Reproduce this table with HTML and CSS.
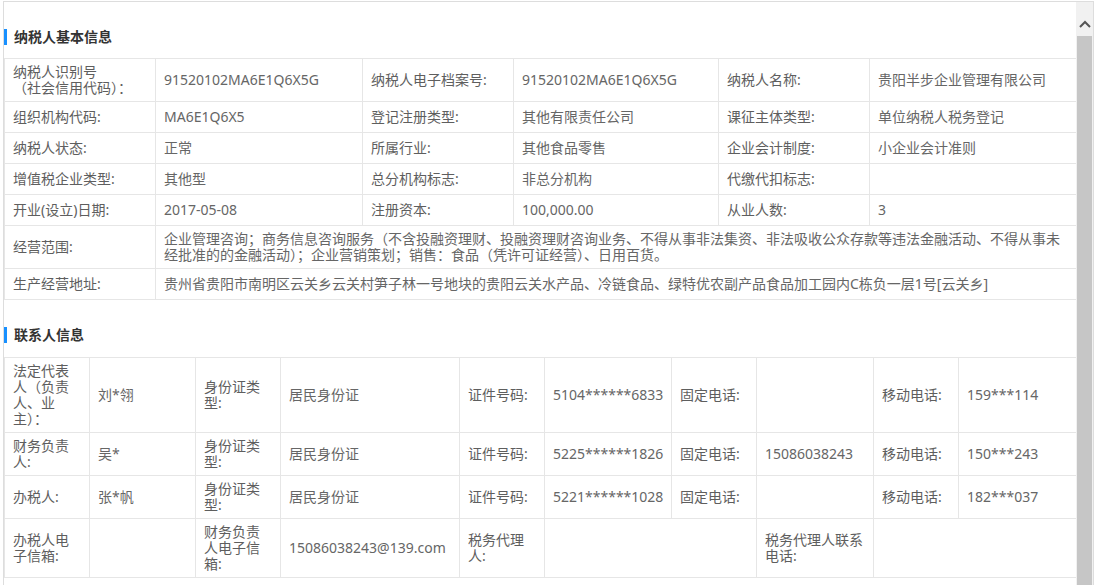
FILE: index.html
```html
<!DOCTYPE html>
<html lang="zh-CN">
<head>
<meta charset="utf-8">
<title>纳税人信息</title>
<link rel="stylesheet" href="styles.css">
</head>
<body>
<div class="frame">
  <div class="content">
    <div class="section-title">纳税人基本信息</div>
    <table class="info">
      <colgroup>
        <col class="c151"><col class="c207"><col class="c151"><col class="c205"><col class="c151"><col class="c207">
      </colgroup>
      <tr>
        <td class="lbl">纳税人识别号<br>（社会信用代码）：</td>
        <td>91520102MA6E1Q6X5G</td>
        <td class="lbl">纳税人电子档案号:</td>
        <td>91520102MA6E1Q6X5G</td>
        <td class="lbl">纳税人名称:</td>
        <td>贵阳半步企业管理有限公司</td>
      </tr>
      <tr>
        <td class="lbl">组织机构代码:</td>
        <td>MA6E1Q6X5</td>
        <td class="lbl">登记注册类型:</td>
        <td>其他有限责任公司</td>
        <td class="lbl">课征主体类型:</td>
        <td>单位纳税人税务登记</td>
      </tr>
      <tr>
        <td class="lbl">纳税人状态:</td>
        <td>正常</td>
        <td class="lbl">所属行业:</td>
        <td>其他食品零售</td>
        <td class="lbl">企业会计制度:</td>
        <td>小企业会计准则</td>
      </tr>
      <tr>
        <td class="lbl">增值税企业类型:</td>
        <td>其他型</td>
        <td class="lbl">总分机构标志:</td>
        <td>非总分机构</td>
        <td class="lbl">代缴代扣标志:</td>
        <td></td>
      </tr>
      <tr>
        <td class="lbl">开业(设立)日期:</td>
        <td>2017-05-08</td>
        <td class="lbl">注册资本:</td>
        <td>100,000.00</td>
        <td class="lbl">从业人数:</td>
        <td>3</td>
      </tr>
      <tr>
        <td class="lbl">经营范围:</td>
        <td colspan="5">企业管理咨询；商务信息咨询服务（不含投融资理财、投融资理财咨询业务、不得从事非法集资、非法吸收公众存款等违法金融活动、不得从事未经批准的的金融活动）；企业营销策划；销售：食品（凭许可证经营）、日用百货。</td>
      </tr>
      <tr>
        <td class="lbl">生产经营地址:</td>
        <td colspan="5">贵州省贵阳市南明区云关乡云关村笋子林一号地块的贵阳云关水产品、冷链食品、绿特优农副产品食品加工园内C栋负一层1号[云关乡]</td>
      </tr>
    </table>

    <div class="section-title second">联系人信息</div>
    <table class="info">
      <colgroup>
        <col class="c85"><col class="c106"><col class="c85"><col class="c179"><col class="c85"><col class="c127"><col class="c85"><col class="c117"><col class="c85"><col class="c118">
      </colgroup>
      <tr>
        <td class="lbl">法定代表人（负责人、业主）：</td>
        <td>刘*翎</td>
        <td class="lbl">身份证类型:</td>
        <td>居民身份证</td>
        <td class="lbl">证件号码:</td>
        <td>5104******6833</td>
        <td class="lbl">固定电话:</td>
        <td></td>
        <td class="lbl">移动电话:</td>
        <td>159***114</td>
      </tr>
      <tr>
        <td class="lbl">财务负责人:</td>
        <td>吴*</td>
        <td class="lbl">身份证类型:</td>
        <td>居民身份证</td>
        <td class="lbl">证件号码:</td>
        <td>5225******1826</td>
        <td class="lbl">固定电话:</td>
        <td>15086038243</td>
        <td class="lbl">移动电话:</td>
        <td>150***243</td>
      </tr>
      <tr>
        <td class="lbl">办税人:</td>
        <td>张*帆</td>
        <td class="lbl">身份证类型:</td>
        <td>居民身份证</td>
        <td class="lbl">证件号码:</td>
        <td>5221******1028</td>
        <td class="lbl">固定电话:</td>
        <td></td>
        <td class="lbl">移动电话:</td>
        <td>182***037</td>
      </tr>
      <tr>
        <td class="lbl">办税人电子信箱:</td>
        <td></td>
        <td class="lbl">财务负责人电子信箱:</td>
        <td>15086038243@139.com</td>
        <td class="lbl">税务代理人:</td>
        <td colspan="2"></td>
        <td class="lbl">税务代理人联系电话:</td>
        <td colspan="2"></td>
      </tr>
    </table>
  </div>
  <div class="scrollbar">
    <div class="arrow">
      <svg width="12" height="8" viewBox="0 0 12 8"><polyline points="1,7 6,2 11,7" fill="none" stroke="#555" stroke-width="2"/></svg>
    </div>
    <div class="thumb"></div>
  </div>
</div>
</body>
</html>
```

FILE: styles.css
```css
html, body {
  margin: 0;
  background: #fff;
}
body {
  padding: 1px 0 0 3px;
  font-family: "Noto Sans", "Noto Sans CJK SC", sans-serif;
  font-size: 14px;
  color: #666;
  overflow: hidden;
}
.frame {
  display: flex;
  width: 1089px;
  height: 584px;
  border: 1px solid #dddddd;
  border-bottom: none;
  overflow: hidden;
}
.content {
  flex: none;
  width: 1072px;
}
.section-title {
  margin: 27px 0 13px;
  height: 16px;
  line-height: 16px;
  border-left: 3px solid #1890ff;
  padding-left: 7px;
  font-size: 14px;
  font-weight: bold;
  color: #333;
}
.section-title.second {
  margin-bottom: 14px;
}
.info {
  width: 1072px;
  border-collapse: collapse;
  table-layout: fixed;
}
.info td {
  border: 1px solid #e6e6e6;
  padding: 5px 8px;
  height: 20px;
  line-height: 16px;
  font-size: 14px;
  color: #666;
  vertical-align: middle;
}
.info td.lbl {
  color: #5e5e5e;
}
.c151 { width: 151px; }
.c207 { width: 207px; }
.c205 { width: 205px; }
.c85 { width: 85px; }
.c106 { width: 106px; }
.c179 { width: 179px; }
.c127 { width: 127px; }
.c117 { width: 117px; }
.c118 { width: 118px; }
.scrollbar {
  flex: none;
  width: 17px;
  background: #f1f1f1;
}
.arrow {
  height: 34px;
  display: flex;
  justify-content: center;
  align-items: flex-start;
}
.arrow svg {
  margin-top: 18px;
}
.thumb {
  margin-left: 1px;
  width: 15px;
  height: 700px;
  background: #c6c6c6;
}
```
